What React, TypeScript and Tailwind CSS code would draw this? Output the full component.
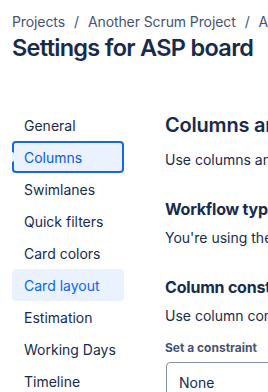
const nav = ['General', 'Columns', 'Swimlanes', 'Quick filters', 'Card colors', 'Card layout', 'Estimation', 'Working Days', 'Timeline']

export default function App() {
  return (
    <div className="h-[392px] w-[268px] overflow-hidden bg-white font-['Inter',sans-serif] text-[#172b4d]">
      <div className="pl-3 pt-3">
        <div className="flex h-5 items-center whitespace-nowrap text-[14px] leading-5 tracking-[-0.1px] text-[#44546f]">
          <span>Projects</span>
          <span className="px-[9px]">/</span>
          <span>Another Scrum Project</span>
          <span className="px-[9px]">/</span>
          <span>ASP board</span>
        </div>
        <h1 className="mt-[2px] whitespace-nowrap text-[23.5px] font-semibold leading-7 tracking-[-0.7px]">Settings for ASP board</h1>
      </div>

      <div className="mt-[47px] flex">
        <nav className="ml-3 flex w-[112px] shrink-0 flex-col">
          {nav.map((n) => {
            const selected = n === 'Columns'
            const hovered = n === 'Card layout'
            return (
              <div
                key={n}
                className={
                  selected
                    ? 'relative flex h-8 items-center rounded-[4px] border-2 border-[#1868db] bg-[#e9f2fe] pl-[10px] text-[14px] text-[#0c5ad7]'
                    : hovered
                      ? 'flex h-8 items-center rounded-[4px] bg-[#e9f2fe] pl-3 text-[14px] text-[#0c66e4]'
                      : 'flex h-8 items-center pl-3 text-[14px] text-[#172b4d]'
                }
              >
                {selected && <span className="absolute left-[-2px] top-[9px] h-[10px] w-[2px] rounded-r bg-[#e9f2fe]" />}
                {n}
              </div>
            )
          })}
        </nav>

        <div className="ml-[41px] mt-1 min-w-0 flex-1 whitespace-nowrap">
          <h2 className="text-[20px] font-semibold leading-6 tracking-[-0.2px]">Columns and statuses</h2>
          <p className="mt-[13px] text-[14px] leading-5">Use columns and statuses to define how work progresses</p>
          <h3 className="mt-[29px] text-[16px] font-bold leading-5 tracking-[-0.2px]">Workflow type</h3>
          <p className="mt-[9px] text-[14px] leading-5">You're using the simplified workflow</p>
          <h3 className="mt-[29px] text-[16px] font-bold leading-5 tracking-[-0.2px]">Column constraint</h3>
          <p className="mt-[9px] text-[14px] leading-5">Use column constraints to limit work</p>
          <div className="mt-[14px] text-[12px] font-bold leading-4 text-[#44546f]">Set a constraint</div>
          <div className="ml-[1px] mt-[6px] flex h-10 w-[200px] items-center rounded-[4px] border border-[#8590a2] pl-3 text-[14px]">None</div>
        </div>
      </div>
    </div>
  )
}
